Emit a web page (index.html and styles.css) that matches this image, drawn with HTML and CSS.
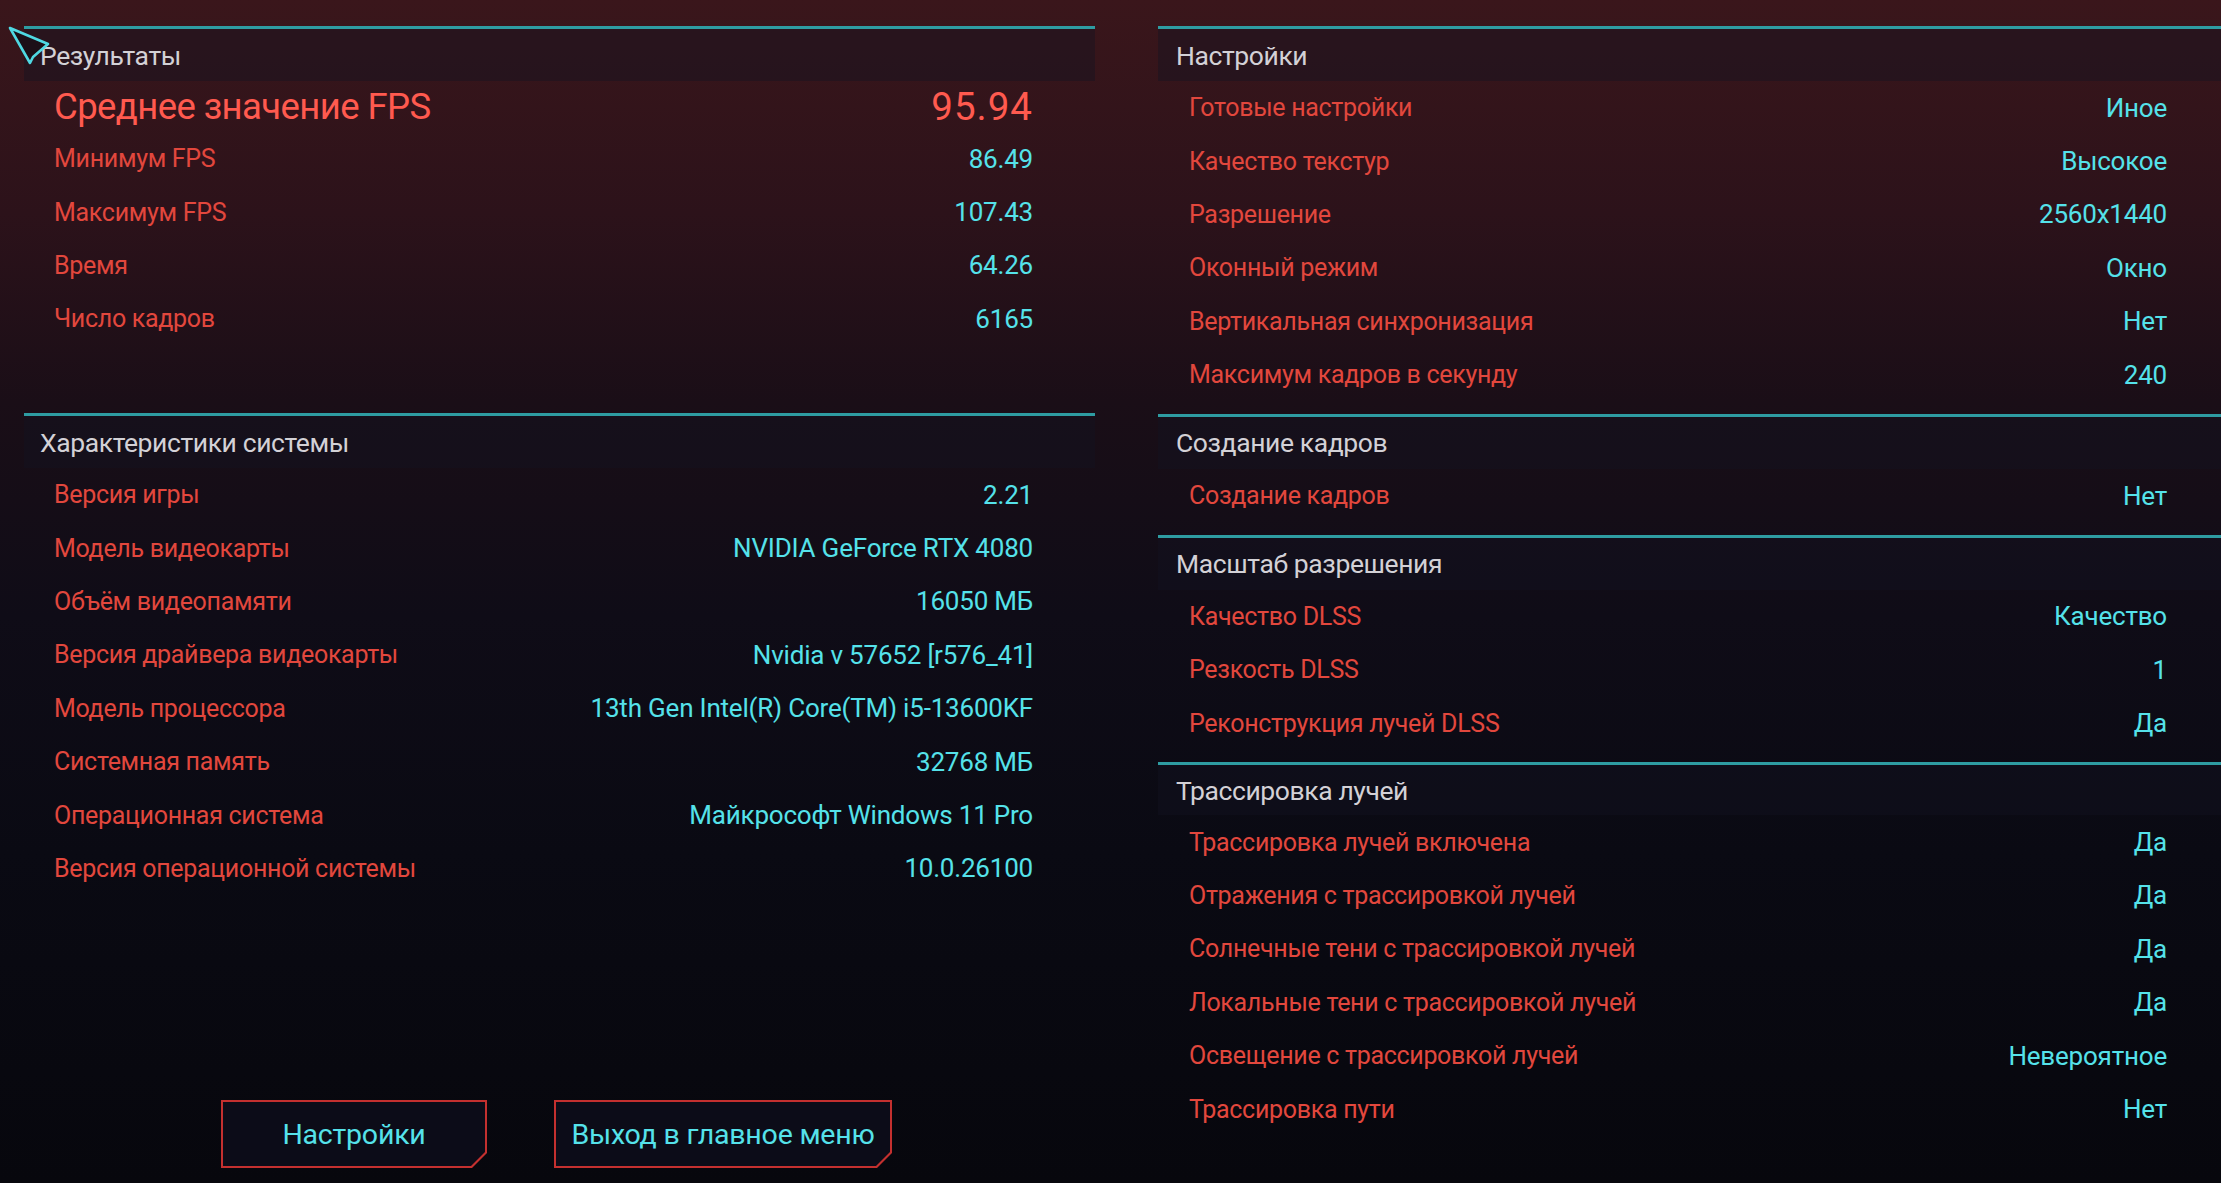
FILE: index.html
```html
<!DOCTYPE html>
<html lang="ru">
<head>
    <meta charset="UTF-8">
    <meta name="viewport" content="width=device-width, initial-scale=1.0">
    <title>Результаты теста производительности</title>
    <link rel="stylesheet" href="styles.css">
</head>
<body>
<div class="screen">
    <svg class="cursor" width="56" height="50" viewBox="0 0 56 50">
        <polygon points="10,8 48,24 33,37 30,43" fill="#1c0f17" stroke="#4fd8e2" stroke-width="2.6" stroke-linejoin="round"/>
    </svg>

    <div class="col col-left">
        <section class="block block-results">
            <h2 class="block-title">Результаты</h2>
            <div class="row row-main"><span class="label">Среднее значение FPS</span><span class="value">95.94</span></div>
            <div class="row"><span class="label">Минимум FPS</span><span class="value">86.49</span></div>
            <div class="row"><span class="label">Максимум FPS</span><span class="value">107.43</span></div>
            <div class="row"><span class="label">Время</span><span class="value">64.26</span></div>
            <div class="row"><span class="label">Число кадров</span><span class="value">6165</span></div>
        </section>

        <section class="block">
            <h2 class="block-title">Характеристики системы</h2>
            <div class="row"><span class="label">Версия игры</span><span class="value">2.21</span></div>
            <div class="row"><span class="label">Модель видеокарты</span><span class="value">NVIDIA GeForce RTX 4080</span></div>
            <div class="row"><span class="label">Объём видеопамяти</span><span class="value">16050 МБ</span></div>
            <div class="row"><span class="label">Версия драйвера видеокарты</span><span class="value">Nvidia v 57652 [r576_41]</span></div>
            <div class="row"><span class="label">Модель процессора</span><span class="value">13th Gen Intel(R) Core(TM) i5-13600KF</span></div>
            <div class="row"><span class="label">Системная память</span><span class="value">32768 МБ</span></div>
            <div class="row"><span class="label">Операционная система</span><span class="value">Майкрософт Windows 11 Pro</span></div>
            <div class="row"><span class="label">Версия операционной системы</span><span class="value">10.0.26100</span></div>
        </section>

        <div class="actions">
            <button class="btn btn-settings"><span>Настройки</span></button>
            <button class="btn btn-exit"><span>Выход в главное меню</span></button>
        </div>
    </div>

    <div class="col col-right">
        <section class="block">
            <h2 class="block-title">Настройки</h2>
            <div class="row"><span class="label">Готовые настройки</span><span class="value">Иное</span></div>
            <div class="row"><span class="label">Качество текстур</span><span class="value">Высокое</span></div>
            <div class="row"><span class="label">Разрешение</span><span class="value">2560x1440</span></div>
            <div class="row"><span class="label">Оконный режим</span><span class="value">Окно</span></div>
            <div class="row"><span class="label">Вертикальная синхронизация</span><span class="value">Нет</span></div>
            <div class="row"><span class="label">Максимум кадров в секунду</span><span class="value">240</span></div>
        </section>

        <section class="block">
            <h2 class="block-title">Создание кадров</h2>
            <div class="row"><span class="label">Создание кадров</span><span class="value">Нет</span></div>
        </section>

        <section class="block">
            <h2 class="block-title">Масштаб разрешения</h2>
            <div class="row"><span class="label">Качество DLSS</span><span class="value">Качество</span></div>
            <div class="row"><span class="label">Резкость DLSS</span><span class="value">1</span></div>
            <div class="row"><span class="label">Реконструкция лучей DLSS</span><span class="value">Да</span></div>
        </section>

        <section class="block block-last">
            <h2 class="block-title">Трассировка лучей</h2>
            <div class="row"><span class="label">Трассировка лучей включена</span><span class="value">Да</span></div>
            <div class="row"><span class="label">Отражения с трассировкой лучей</span><span class="value">Да</span></div>
            <div class="row"><span class="label">Солнечные тени с трассировкой лучей</span><span class="value">Да</span></div>
            <div class="row"><span class="label">Локальные тени с трассировкой лучей</span><span class="value">Да</span></div>
            <div class="row"><span class="label">Освещение с трассировкой лучей</span><span class="value">Невероятное</span></div>
            <div class="row"><span class="label">Трассировка пути</span><span class="value">Нет</span></div>
        </section>
    </div>
</div>
</body>
</html>
```

FILE: styles.css
```css
html, body {
    margin: 0;
    height: 100%;
}
body {
    font-family: Roboto, "Liberation Sans", sans-serif;
    background: linear-gradient(180deg, #3a161b 0%, #2c121a 18%, #1a0e17 34%, #0f0c17 52%, #0a0a13 72%, #07070d 100%);
    overflow: hidden;
}
.screen {
    position: relative;
    box-sizing: border-box;
    height: 1183px;
    display: grid;
    grid-template-columns: 1071px 1fr;
    column-gap: 63px;
    padding: 26px 0 15px 24px;
}
.cursor {
    position: absolute;
    left: 0;
    top: 20px;
    z-index: 2;
}
.col {
    display: flex;
    flex-direction: column;
}
.block {
    margin-bottom: 12.5px;
}
.block-results {
    min-height: 374.5px;
}
.block-title {
    margin: 0;
    height: 52px;
    display: flex;
    align-items: center;
    border-top: 3px solid #2e9ca2;
    background: rgba(20, 18, 34, 0.42);
    color: #d3d1d6;
    font-size: 26.5px;
    font-weight: 400;
    letter-spacing: -0.4px;
    padding-left: 16px;
}
.col-right .block-title {
    padding-left: 18px;
}
.block-last .block-title {
    height: 50px;
}
.row {
    height: 53.4px;
    display: flex;
    align-items: center;
    justify-content: space-between;
    padding: 0 62px 0 30px;
}
.col-right .row {
    padding: 0 54px 0 31px;
}
.label {
    color: #e2473d;
    font-size: 25px;
    letter-spacing: -0.3px;
}
.value {
    color: #55e2ea;
    font-size: 26px;
    letter-spacing: -0.2px;
}
.row-main {
    height: 51px;
}
.row-main .label {
    color: #ff5a4f;
    font-size: 36.5px;
    letter-spacing: -0.6px;
}
.row-main .value {
    color: #ff5a4f;
    font-size: 38.5px;
    letter-spacing: 1px;
}
.actions {
    margin-top: auto;
    display: flex;
    gap: 67px;
    padding-left: 197px;
}
.btn {
    border: none;
    padding: 2px;
    height: 68px;
    background: #c4302f;
    clip-path: polygon(0 0, 100% 0, 100% calc(100% - 15px), calc(100% - 15px) 100%, 0 100%);
    cursor: pointer;
}
.btn span {
    display: flex;
    align-items: center;
    justify-content: center;
    height: 100%;
    background: #0c0c18;
    clip-path: polygon(0 0, 100% 0, 100% calc(100% - 14px), calc(100% - 14px) 100%, 0 100%);
    color: #55e2ea;
    font-family: Roboto, "Liberation Sans", sans-serif;
    font-size: 28.5px;
    letter-spacing: -0.2px;
    white-space: nowrap;
}
.btn-settings {
    width: 266px;
}
.btn-exit {
    width: 338px;
}
```
